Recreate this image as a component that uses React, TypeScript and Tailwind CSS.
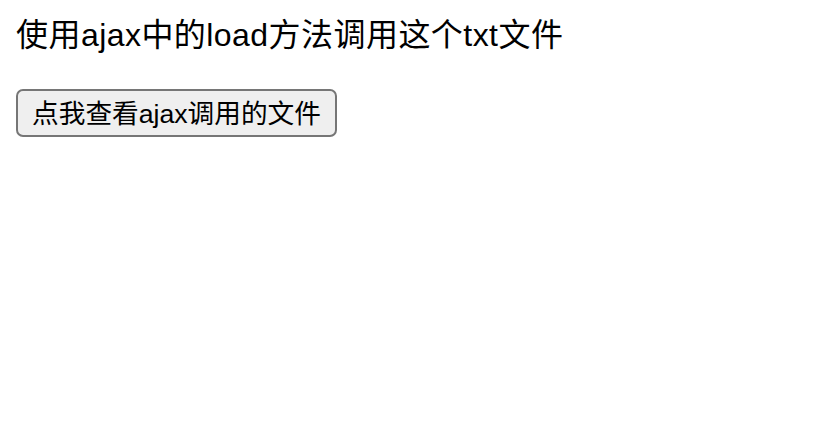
export default function App() {
  return (
    <div
      className="min-h-screen bg-white p-4 text-black"
      style={{ fontFamily: '"Liberation Sans", "Noto Sans CJK SC", sans-serif' }}
    >
      <div className="pt-px text-[32px] leading-[36px] tracking-[0.45px]">使用ajax中的load方法调用这个txt文件</div>
      <div className="mt-[36px] flex">
        <button
          type="button"
          className="flex h-[48px] w-[321px] items-center justify-center rounded-[7px] border-2 border-[#767676] bg-[#efefef] px-3 pt-[2px] text-[26.67px] leading-none text-black"
        >
          点我查看ajax调用的文件
        </button>
      </div>
    </div>
  );
}
